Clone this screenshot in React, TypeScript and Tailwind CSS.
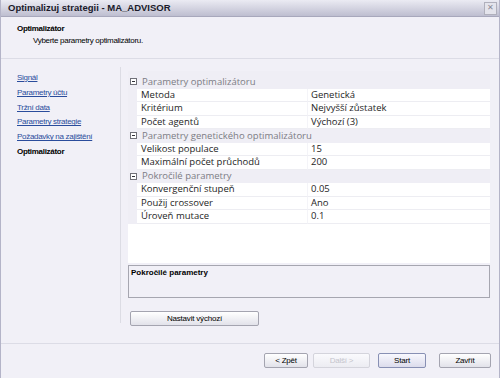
import React from 'react'

const NAV = ['Signál', 'Parametry účtu', 'Tržní data', 'Parametry strategie', 'Požadavky na zajištění']

type Row = { name: string; value: string }
const GROUPS: { title: string; rows: Row[] }[] = [
  {
    title: 'Parametry optimalizátoru',
    rows: [
      { name: 'Metoda', value: 'Genetická' },
      { name: 'Kritérium', value: 'Nejvyšší zůstatek' },
      { name: 'Počet agentů', value: 'Výchozí (3)' },
    ],
  },
  {
    title: 'Parametry genetického optimalizátoru',
    rows: [
      { name: 'Velikost populace', value: '15' },
      { name: 'Maximální počet průchodů', value: '200' },
    ],
  },
  {
    title: 'Pokročilé parametry',
    rows: [
      { name: 'Konvergenční stupeň', value: '0.05' },
      { name: 'Použij crossover', value: 'Ano' },
      { name: 'Úroveň mutace', value: '0.1' },
    ],
  },
]

function Minus() {
  return (
    <svg width="7" height="7" viewBox="0 0 7 7" className="shrink-0">
      <rect x="0.5" y="0.5" width="6" height="6" fill="#fff" stroke="#707078" />
      <line x1="2" y1="3.5" x2="5" y2="3.5" stroke="#303038" />
    </svg>
  )
}

function Btn({ label, w, kind, className = '' }: { label: string; w: string; kind?: 'default' | 'disabled'; className?: string }) {
  const base = `h-[15px] shrink-0 flex items-center justify-center rounded-[2px] border text-[8px] tracking-[-0.2px] ${className}`
  if (kind === 'disabled')
    return <div className={`${base} ${w} border-[#d4d4dc] bg-gradient-to-b from-[#fafafd] to-[#ececf2] text-[#c4c4cc]`}>{label}</div>
  if (kind === 'default')
    return <div className={`${base} ${w} border-[#8890b4] bg-gradient-to-b from-[#f8f8fe] to-[#dcdcec] text-black`}>{label}</div>
  return <div className={`${base} ${w} border-[#a4a4b0] bg-gradient-to-b from-white to-[#e2e2ea] text-black`}>{label}</div>
}

export default function App() {
  return (
    <div
      className="w-[500px] h-[378px] flex flex-col bg-[#f1f0f7] border-x border-[#b4b4c8] text-black overflow-hidden"
      style={{ fontFamily: '"Liberation Sans", Arial, sans-serif' }}
    >
      {/* title bar */}
      <div className="h-[17px] shrink-0 flex items-center justify-between pl-[7px] pr-[2px] bg-gradient-to-b from-[#ebebf3] to-[#bebed0] border-b border-[#a8a8bc]">
        <span className="text-[9.5px] font-bold text-[#1a1a2a]">Optimalizuj strategii - MA_ADVISOR</span>
        <div className="w-[13px] h-[13px] border border-[#b0b0bc] bg-[#e4e4ec] flex items-center justify-center text-[8px] leading-none text-[#8a8a96]">
          ✕
        </div>
      </div>

      {/* header */}
      <div className="h-[42px] shrink-0 pt-[6px] pl-[16px] border-b border-[#dcdce6] leading-[12px] text-[8px] tracking-[-0.3px]">
        <div className="font-bold">Optimalizátor</div>
        <div className="pl-[16px]">Vyberte parametry optimalizátoru.</div>
      </div>

      {/* main */}
      <div className="flex-1 flex items-start">
        <div className="w-[120px] shrink-0 mt-[8px] h-[256px] border-r border-[#dcdce4] pl-[16px] pt-[4px] leading-[14.8px] text-[8px] tracking-[-0.3px]">
          {NAV.map(n => (
            <div key={n} className="text-[#2a4c9c] underline">{n}</div>
          ))}
          <div className="font-bold">Optimalizátor</div>
        </div>

        <div className="flex-1 pl-[7px] pr-[9px] pt-[12px]">
          <div
            className="h-[192px] bg-white flex flex-col text-[9.5px] text-[#1e1e1e]"
            style={{ fontFamily: '"Open Sans", "Noto Sans", sans-serif' }}
          >
            <div className="h-[4px] shrink-0 bg-[#efeef5]" />
            {GROUPS.map(g => (
              <React.Fragment key={g.title}>
                <div className="h-[13.5px] shrink-0 bg-[#efeef5] flex items-center pl-[2px] gap-[5px]">
                  <Minus />
                  <span className="text-[#7c7c84] font-medium">{g.title}</span>
                </div>
                {g.rows.map(r => (
                  <div key={r.name} className="h-[13.5px] shrink-0 flex">
                    <div className="w-[9px] shrink-0 bg-[#efeef5]" />
                    <div className="w-[171px] shrink-0 flex items-center pl-[4px] border-b border-[#ededf2] border-r border-r-[#f4f4f8]">
                      {r.name}
                    </div>
                    <div className="flex-1 flex items-center pl-[3px] border-b border-[#ededf2]">{r.value}</div>
                  </div>
                ))}
              </React.Fragment>
            ))}
          </div>

          <div className="mt-[2px] h-[33px] border border-[#a6a6b0] px-[2px] pt-[2px] text-[8px] font-bold leading-[10px]">
            Pokročilé parametry
          </div>

          <div className="mt-[13px] ml-[2px]">
            <Btn label="Nastavit výchozí" w="w-[129px]" />
          </div>
        </div>
      </div>

      {/* footer */}
      <div className="h-[35px] shrink-0 border-t border-[#dcdce6] flex items-start pt-[9px] pl-[263px]">
        <Btn label="< Zpět" w="w-[44px]" />
        <Btn label="Další >" w="w-[57px]" kind="disabled" className="ml-[5px]" />
        <Btn label="Start" w="w-[48px]" kind="default" className="ml-[8px]" />
        <Btn label="Zavřít" w="w-[52px]" className="ml-[13px]" />
      </div>
    </div>
  )
}
